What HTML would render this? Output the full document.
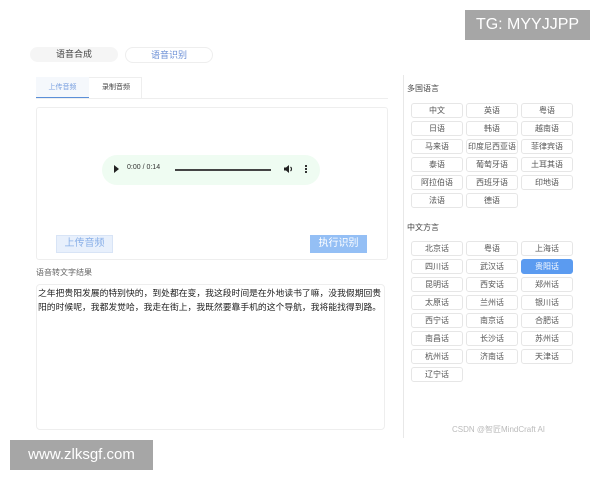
<!DOCTYPE html>
<html><head><meta charset="utf-8"><style>
*{margin:0;padding:0;box-sizing:border-box}
body{width:600px;height:480px;background:#fff;position:relative;overflow:hidden;font-family:"Liberation Sans","Noto Sans CJK SC",sans-serif;color:#333}
.a{position:absolute}
.b{position:absolute;width:52px;height:15px;border:1px solid #e6e6e6;border-radius:3px;font-size:8px;line-height:13px;text-align:center;color:#555;background:#fff}
.sel{background:#5b9bf0;border-color:#5b9bf0;color:#fff}
</style></head><body>
<div class="a" style="left:465px;top:10px;width:125px;height:30px;background:#a6a6a6;color:#fff;font-size:16px;line-height:30px;text-align:center">TG: MYYJJPP</div>
<div class="a" style="left:30px;top:47px;width:88px;height:15px;background:#f5f5f5;border-radius:8px;font-size:9px;line-height:15px;text-align:center;color:#444">语音合成</div>
<div class="a" style="left:125px;top:47px;width:88px;height:16px;background:#fff;border:1px solid #eee;border-radius:8px;font-size:9px;line-height:14px;text-align:center;color:#6b8fd6">语音识别</div>
<div class="a" style="left:36px;top:77px;width:106px;height:21px;border:1px solid #eee;border-bottom:none"></div>
<div class="a" style="left:36px;top:98px;width:352px;height:1px;background:#eee"></div>
<div class="a" style="left:36px;top:77px;width:53px;height:21px;background:#f5f8fc;border-bottom:1px solid #5b8fd8;font-size:7px;line-height:21px;text-align:center;color:#7aa0e0">上传音频</div>
<div class="a" style="left:90px;top:77px;width:52px;height:21px;font-size:7px;line-height:21px;text-align:center;color:#444">录制音频</div>
<div class="a" style="left:36px;top:107px;width:352px;height:153px;border:1px solid #eee;border-radius:3px"></div>
<div class="a" style="left:102px;top:155px;width:218px;height:30px;background:#effcf2;border-radius:15px"></div>
<div class="a" style="left:114px;top:165px;width:0;height:0;border-left:5px solid #222;border-top:4px solid transparent;border-bottom:4px solid transparent"></div>
<div class="a" style="left:127px;top:164px;font-size:7px;color:#333">0:00 / 0:14</div>
<div class="a" style="left:175px;top:169px;width:96px;height:2px;background:#444"></div>
<svg class="a" style="left:284px;top:164px" width="10" height="10" viewBox="0 0 10 10"><path d="M0 3.5h2l3-2.5v8l-3-2.5H0z" fill="#222"/><path d="M6.5 3a2.5 2.5 0 0 1 0 4" stroke="#222" fill="none" stroke-width="1.2"/></svg>
<div class="a" style="left:305px;top:165px;width:2px;height:2px;background:#333;box-shadow:0 3px 0 #333,0 6px 0 #333"></div>
<div class="a" style="left:56px;top:235px;width:57px;height:18px;background:#e8f0fc;border:1px solid #d8e4f6;font-size:10px;line-height:16px;text-align:center;color:#8ab0e8">上传音频</div>
<div class="a" style="left:310px;top:235px;width:57px;height:18px;background:#94bff5;font-size:10px;line-height:18px;text-align:center;color:#fff">执行识别</div>
<div class="a" style="left:36px;top:267px;font-size:8px;color:#666">语音转文字结果</div>
<div class="a" style="left:36px;top:284px;width:349px;height:146px;border:1px solid #eee;border-radius:4px"></div>
<div class="a" style="left:38px;top:286px;white-space:nowrap;font-size:8.8px;line-height:14px;color:#222">之年把贵阳发展的特别快的，到处都在变，我这段时间是在外地读书了嘛，没我假期回贵<br>阳的时候呢，我都发觉哈，我走在街上，我既然要靠手机的这个导航，我将能找得到路。</div>
<div class="a" style="left:10px;top:440px;width:143px;height:30px;background:#a6a6a6;color:#fff;font-size:15px;line-height:30px;text-align:center">www.zlksgf.com</div>
<div class="a" style="left:403px;top:75px;width:1px;height:363px;background:#e8e8e8"></div>
<div class="a" style="left:407px;top:83px;font-size:8px;color:#444">多国语言</div>
<div class="a" style="left:407px;top:222px;font-size:8px;color:#444">中文方言</div>
<div class="a" style="left:452px;top:424px;font-size:8px;color:#bbb">CSDN @智匠MindCraft AI</div>
<div class="b" style="left:411px;top:103px">中文</div><div class="b" style="left:466px;top:103px">英语</div><div class="b" style="left:521px;top:103px">粤语</div>
<div class="b" style="left:411px;top:121px">日语</div><div class="b" style="left:466px;top:121px">韩语</div><div class="b" style="left:521px;top:121px">越南语</div>
<div class="b" style="left:411px;top:139px">马来语</div><div class="b" style="left:466px;top:139px">印度尼西亚语</div><div class="b" style="left:521px;top:139px">菲律宾语</div>
<div class="b" style="left:411px;top:157px">泰语</div><div class="b" style="left:466px;top:157px">葡萄牙语</div><div class="b" style="left:521px;top:157px">土耳其语</div>
<div class="b" style="left:411px;top:175px">阿拉伯语</div><div class="b" style="left:466px;top:175px">西班牙语</div><div class="b" style="left:521px;top:175px">印地语</div>
<div class="b" style="left:411px;top:193px">法语</div><div class="b" style="left:466px;top:193px">德语</div>
<div class="b" style="left:411px;top:241px">北京话</div><div class="b" style="left:466px;top:241px">粤语</div><div class="b" style="left:521px;top:241px">上海话</div>
<div class="b" style="left:411px;top:259px">四川话</div><div class="b" style="left:466px;top:259px">武汉话</div><div class="b sel" style="left:521px;top:259px">贵阳话</div>
<div class="b" style="left:411px;top:277px">昆明话</div><div class="b" style="left:466px;top:277px">西安话</div><div class="b" style="left:521px;top:277px">郑州话</div>
<div class="b" style="left:411px;top:295px">太原话</div><div class="b" style="left:466px;top:295px">兰州话</div><div class="b" style="left:521px;top:295px">银川话</div>
<div class="b" style="left:411px;top:313px">西宁话</div><div class="b" style="left:466px;top:313px">南京话</div><div class="b" style="left:521px;top:313px">合肥话</div>
<div class="b" style="left:411px;top:331px">南昌话</div><div class="b" style="left:466px;top:331px">长沙话</div><div class="b" style="left:521px;top:331px">苏州话</div>
<div class="b" style="left:411px;top:349px">杭州话</div><div class="b" style="left:466px;top:349px">济南话</div><div class="b" style="left:521px;top:349px">天津话</div>
<div class="b" style="left:411px;top:367px">辽宁话</div>
</body></html>
